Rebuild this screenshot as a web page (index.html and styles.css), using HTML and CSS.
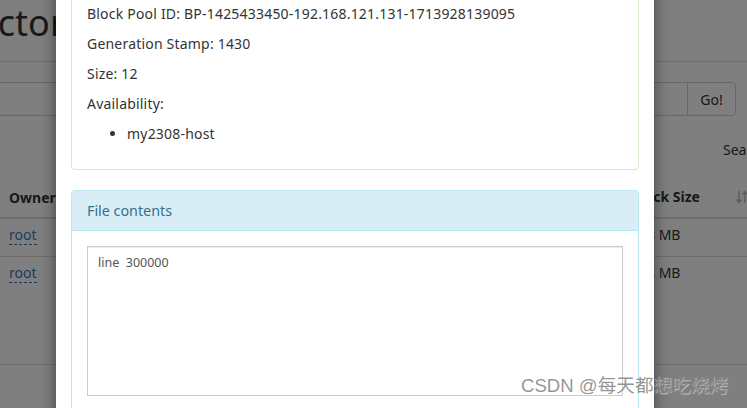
FILE: index.html
```html
<!DOCTYPE html>
<html>
<head>
<meta charset="utf-8">
<link rel="stylesheet" href="styles.css">
</head>
<body>
<div class="page">
  <div class="page-header"><h1>Browse Directory</h1></div>
  <div class="search-row">
    <div class="input-group">
      <div class="form-control"></div>
      <button class="btn-go">Go!</button>
    </div>
  </div>
  <div class="dt-top"><span class="dt-label">Search:</span></div>
  <table class="tbl">
    <thead>
      <tr><th class="c-owner">Owner</th><th class="c-mid"></th><th class="c-bs">Block Size<span class="sort-ico"><svg width="12" height="14" viewBox="0 0 12 14"><path d="M3 1v11M0.5 9.5L3 12.5 5.5 9.5M9 13V2M6.5 4.5L9 1.5 11.5 4.5" fill="none" stroke="#bbb" stroke-width="1.6"/></svg></span></th></tr>
    </thead>
    <tbody>
      <tr><td class="c-owner"><span class="owner-link">root</span></td><td></td><td class="c-bs">128 MB</td></tr>
      <tr class="r2"><td class="c-owner"><span class="owner-link">root</span></td><td></td><td class="c-bs">128 MB</td></tr>
    </tbody>
  </table>
  <div class="footer-line"></div>
</div>
<div class="backdrop"></div>
<div class="modal">
  <div class="panel panel-success">
    <div class="panel-body">
      <p>Block Pool ID: BP-1425433450-192.168.121.131-1713928139095</p>
      <p>Generation Stamp: 1430</p>
      <p>Size: 12</p>
      <p>Availability:</p>
      <ul><li>my2308-host</li></ul>
    </div>
  </div>
  <div class="panel panel-info">
    <div class="panel-heading"><h3 class="panel-title">File contents</h3></div>
    <div class="panel-body">
      <textarea class="file-text" readonly>line  300000</textarea>
    </div>
  </div>
</div>
<div class="watermark">CSDN @每天都想吃烧烤</div>
</body>
</html>
```

FILE: styles.css
```css
* { box-sizing: border-box; }
html, body { margin: 0; padding: 0; }
body {
  width: 747px;
  height: 408px;
  overflow: hidden;
  position: relative;
  font-family: "Noto Sans", "Open Sans", sans-serif;
  font-size: 14px;
  line-height: 20px;
  color: #333;
  background: #fff;
}
.page { width: 747px; }
.page-header {
  padding: 3px 0 18px;
  border-bottom: 1px solid #ddd;
  height: 62px;
}
.page-header h1 {
  margin: 0 0 0 -206px;
  font-size: 36px;
  line-height: 40px;
  font-weight: 400;
  white-space: nowrap;
}
.search-row { margin-top: 20px; }
.input-group { display: flex; height: 34px; }
.form-control {
  flex: 1;
  border: 1px solid #ccc;
  border-left: none;
  border-right: none;
}
.btn-go {
  width: 49px;
  height: 34px;
  margin-right: 11px;
  border: 1px solid #ccc;
  border-radius: 0 4px 4px 0;
  background: #fff;
  font-family: inherit;
  font-size: 14px;
  color: #333;
  padding: 0;
}
.dt-top {
  margin-top: 24px;
  height: 20px;
  padding-left: 723px;
  white-space: nowrap;
}
.tbl {
  margin-top: 19px;
  width: 747px;
  border-collapse: collapse;
  table-layout: fixed;
}
.tbl th, .tbl td {
  padding: 8px;
  text-align: left;
  line-height: 21px;
  white-space: nowrap;
}
.tbl td { padding: 5px 8px 11px; }
.tbl th { border-bottom: 2px solid #ddd; font-weight: 700; line-height: 20px; }
.tbl .r2 td { border-top: 1px solid #ddd; }
.c-owner { width: 200px; padding-left: 9px !important; }
.c-bs { width: 124px; }
.sort-ico { display: inline-block; margin-left: 36px; vertical-align: -2px; }
.owner-link { color: #337ab7; border-bottom: 1px dashed #337ab7; }
.footer-line { margin-top: 70px; border-top: 1px solid #ddd; }

.backdrop {
  position: absolute;
  inset: 0;
  background: rgba(0,0,0,0.5);
}
.modal {
  position: absolute;
  left: 56px;
  top: -27px;
  width: 598px;
  height: 460px;
  background: #fff;
  padding: 15px;
  border-radius: 6px;
  box-shadow: 0 5px 15px rgba(0,0,0,0.5);
}
.panel {
  border: 1px solid transparent;
  border-radius: 4px;
  margin-bottom: 20px;
  background: #fff;
}
.panel-success { border-color: #d6e9c6; }
.panel-info { border-color: #bce8f1; }
.panel-body { padding: 15px; }
.panel-success .panel-body { letter-spacing: 0.2px; }
.panel-body p { margin: 0 0 10px; }
.panel-body ul { margin: 0 0 10px; padding-left: 40px; }
.panel-info .panel-heading {
  background: #d9edf7;
  color: #31708f;
  border-bottom: 1px solid #bce8f1;
  padding: 10px 15px;
  border-radius: 3px 3px 0 0;
}
.panel-title {
  margin: 0;
  font-size: 14.3px;
  font-weight: 400;
  line-height: 19px;
}
.file-text {
  display: block;
  width: 536px;
  height: 150px;
  resize: none;
  border: 1px solid #ccc;
  border-radius: 0;
  box-shadow: inset 0 1px 1px rgba(0,0,0,0.075);
  padding: 6px 10px;
  font-family: "Noto Sans", "Open Sans", sans-serif;
  font-size: 12.5px;
  line-height: 20px;
  color: #555;
  white-space: pre;
  outline: none;
}
.watermark {
  position: absolute;
  left: 521px;
  top: 374px;
  font-family: "Liberation Sans", "Noto Sans CJK SC", sans-serif;
  font-size: 18.6px;
  line-height: 24px;
  color: rgba(130,130,130,0.85);
  text-shadow: 1px 1px 1px rgba(255,255,255,0.5);
  white-space: nowrap;
}
```
